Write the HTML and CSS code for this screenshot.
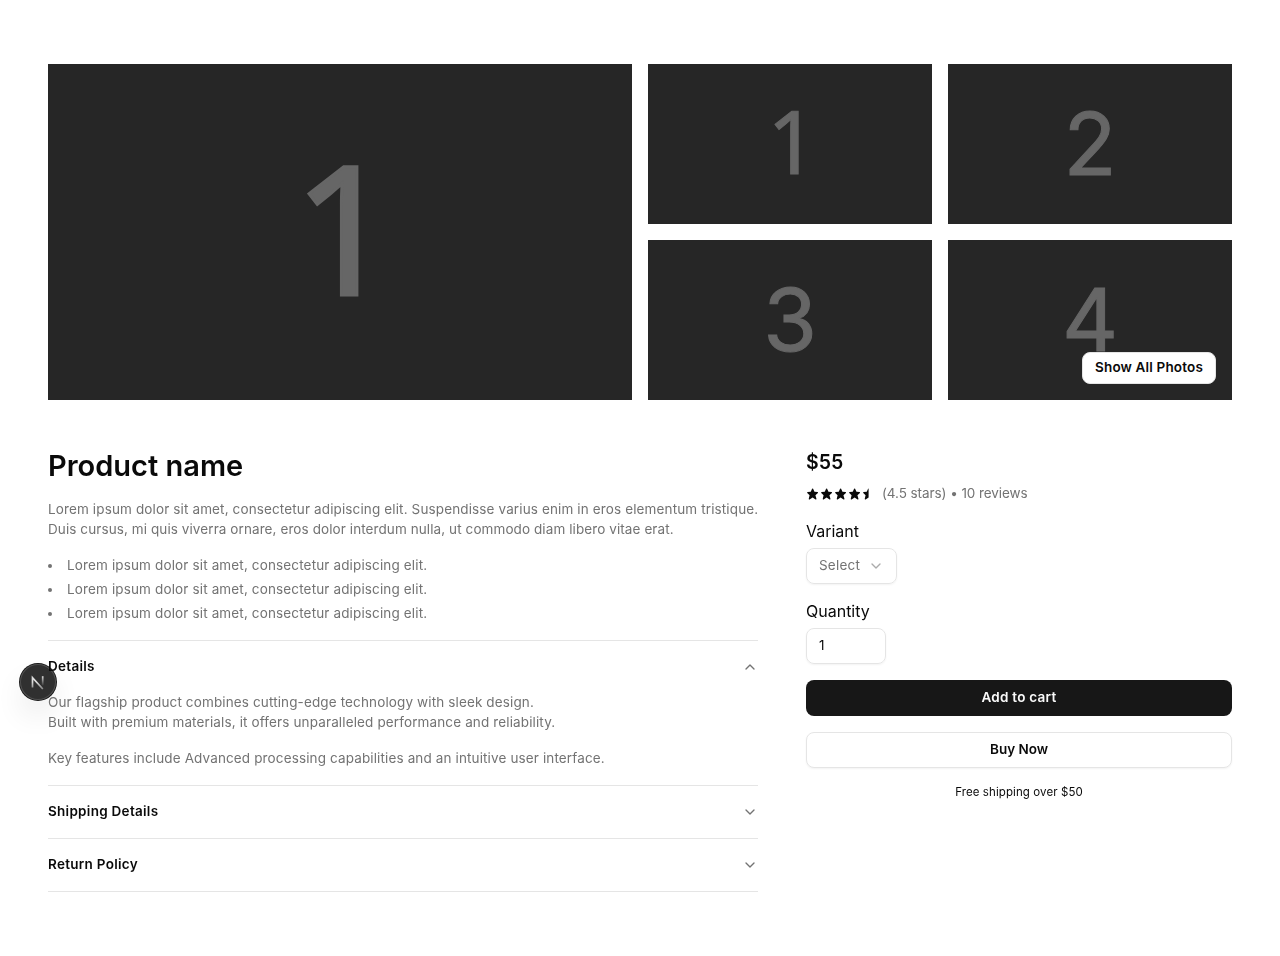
FILE: index.html
```html
<!DOCTYPE html>
<html lang="en">
<head>
<meta charset="utf-8">
<title>Product name</title>
<link rel="stylesheet" href="styles.css">
</head>
<body>
<svg class="defs" width="0" height="0" aria-hidden="true">
  <symbol id="star" viewBox="0 0 24 24"><path d="M21.947 9.179a1.001 1.001 0 0 0-.868-.676l-5.701-.453-2.467-5.461a.998.998 0 0 0-1.822-.001L8.622 8.05l-5.701.453a1 1 0 0 0-.619 1.713l4.213 4.107-1.49 6.452a1 1 0 0 0 1.53 1.057L12 18.202l5.445 3.63a1.001 1.001 0 0 0 1.517-1.106l-1.829-6.4 4.536-4.082c.297-.268.406-.686.278-1.065z"/></symbol>
  <symbol id="half" viewBox="0 0 24 24"><path d="M12 2a1 1 0 0 0-.911.587L8.622 8.05l-5.701.453a1 1 0 0 0-.619 1.713l4.213 4.107-1.49 6.452a1 1 0 0 0 1.53 1.057L12 18.202z"/></symbol>
  <symbol id="chevron" viewBox="0 0 24 24"><path d="m6 9 6 6 6-6" fill="none" stroke="currentColor" stroke-width="2" stroke-linecap="round" stroke-linejoin="round"/></symbol>
</svg>
<main class="page">
  <section class="gallery">
    <div class="tile tile-main"><span class="one">1</span></div>
    <div class="tile"><span class="one">1</span></div>
    <div class="tile"><span class="digit">2</span></div>
    <div class="tile"><span class="digit">3</span></div>
    <div class="tile"><span class="digit">4</span><button class="show-all">Show All Photos</button></div>
  </section>
  <div class="columns">
    <section class="info">
      <h1 class="title">Product name</h1>
      <p class="lead">Lorem ipsum dolor sit amet, consectetur adipiscing elit. Suspendisse varius enim in eros elementum tristique.<br><span class="lead-end">Duis cursus, mi quis viverra ornare, eros dolor interdum nulla, ut commodo diam libero vitae erat.</span></p>
      <ul class="bullets">
        <li>Lorem ipsum dolor sit amet, consectetur adipiscing elit.</li>
        <li>Lorem ipsum dolor sit amet, consectetur adipiscing elit.</li>
        <li>Lorem ipsum dolor sit amet, consectetur adipiscing elit.</li>
      </ul>
      <div class="accordion">
        <div class="item">
          <div class="trigger"><span>Details</span><svg class="chev up"><use href="#chevron"/></svg></div>
          <div class="content">
            <p>Our flagship product combines cutting-edge technology with sleek design.<br>Built with premium materials, it offers unparalleled performance and reliability.</p>
            <p>Key features include Advanced processing capabilities and an intuitive user interface.</p>
          </div>
        </div>
        <div class="item"><div class="trigger"><span>Shipping Details</span><svg class="chev"><use href="#chevron"/></svg></div></div>
        <div class="item"><div class="trigger"><span>Return Policy</span><svg class="chev"><use href="#chevron"/></svg></div></div>
      </div>
    </section>
    <aside class="buy">
      <div class="price">$55</div>
      <div class="rating">
        <div class="stars"><svg><use href="#star"/></svg><svg><use href="#star"/></svg><svg><use href="#star"/></svg><svg><use href="#star"/></svg><svg><use href="#half"/></svg></div>
        <span class="reviews">(4.5 stars) • 10 reviews</span>
      </div>
      <div class="field">
        <div class="label">Variant</div>
        <div class="box select"><span>Select</span><svg class="chev light"><use href="#chevron"/></svg></div>
      </div>
      <div class="field">
        <div class="label">Quantity</div>
        <div class="box number"><span>1</span></div>
      </div>
      <button class="btn primary">Add to cart</button>
      <button class="btn outline">Buy Now</button>
      <div class="shipping">Free shipping over $50</div>
    </aside>
  </div>
</main>
<div class="badge">
  <svg viewBox="0 0 36 36">
    <defs>
      <linearGradient id="fadeA" x1="0" y1="12" x2="0" y2="24" gradientUnits="userSpaceOnUse"><stop offset=".5" stop-color="#ddd"/><stop offset="1" stop-color="#ddd" stop-opacity=".55"/></linearGradient>
      <linearGradient id="fadeB" x1="0" y1="12" x2="0" y2="22" gradientUnits="userSpaceOnUse"><stop stop-color="#ddd"/><stop offset="1" stop-color="#ddd" stop-opacity="0"/></linearGradient>
    </defs>
    <path d="M12.5 23.6V13.6L22.8 25" fill="none" stroke="url(#fadeA)" stroke-width="1.7"/>
    <path d="M22.7 12.2V21.5" fill="none" stroke="url(#fadeB)" stroke-width="1.7"/>
  </svg>
</div>
</body>
</html>
```
FILE: styles.css
```css
* { box-sizing: border-box; margin: 0; padding: 0; }
body {
  background: #fff;
  color: #0a0a0a;
  font-family: Inter, Roboto, sans-serif;
  font-size: 13.5px;
  line-height: 20px;
}
.defs { position: absolute; }
.page { padding: 64px 48px; }
.gallery {
  display: grid;
  grid-template-columns: 584px 1fr 1fr;
  grid-template-rows: 160px 160px;
  gap: 16px;
}
.tile {
  position: relative;
  display: flex;
  align-items: center;
  justify-content: center;
  background: #262626;
  color: #666;
  font-size: 87px;
  line-height: 1;
  -webkit-text-stroke: 1px #666;
}
.tile-main { grid-row: span 2; font-size: 180px; -webkit-text-stroke-width: 3px; }
.one { font-family: "Noto Sans", sans-serif; padding: 0 0 .07em .05em; }
.digit { padding-bottom: 2px; }
.show-all {
  position: absolute;
  right: 16px;
  bottom: 16px;
  width: 134px;
  height: 32px;
  padding-bottom: 2px;
  border: 1px solid #e5e5e5;
  border-radius: 8px;
  background: #fff;
  color: #0a0a0a;
  font: 600 13.5px/20px Inter, sans-serif;
  letter-spacing: .16px;
  white-space: nowrap;
  -webkit-text-stroke: 0;
}
.columns {
  display: grid;
  grid-template-columns: 710px 426px;
  gap: 48px;
  margin-top: 48px;
}
.title { font-size: 29px; line-height: 36px; font-weight: 600; white-space: nowrap; }
.lead { margin-top: 15px; color: #737373; white-space: nowrap; letter-spacing: .13px; }
.lead-end { letter-spacing: .09px; }
.bullets { margin-top: 16px; list-style: none; display: grid; gap: 4px; color: #737373; letter-spacing: .14px; }
.bullets li { display: flex; align-items: center; gap: 15px; white-space: nowrap; }
.bullets li::before { content: ""; width: 4px; height: 4px; margin-top: 2px; border-radius: 50%; background: #737373; }
.accordion { margin-top: 17px; border-top: 1px solid #e5e5e5; }
.item { border-bottom: 1px solid #e5e5e5; }
.trigger {
  display: flex;
  justify-content: space-between;
  align-items: center;
  height: 52px;
  font-weight: 600;
  letter-spacing: .28px;
}
.trigger span, .reviews, .box span { padding-bottom: 2px; }
.chev { width: 16px; height: 16px; color: #737373; }
.up { transform: rotate(180deg); }
.light { opacity: .6; }
.content { display: grid; gap: 16px; margin-top: -1px; padding-bottom: 17px; color: #737373; white-space: nowrap; letter-spacing: .13px; }
.buy { display: flex; flex-direction: column; }
.price { font-size: 19.5px; line-height: 28px; font-weight: 600; }
.rating { display: flex; align-items: center; gap: 6px; height: 20px; margin-top: 8px; color: #737373; letter-spacing: -.07px; }
.stars { display: flex; color: #0a0a0a; fill: currentColor; }
.stars svg { width: 14px; height: 14px; padding: .3px .8px .3px 0; }
.field { margin-top: 16px; }
.label { height: 24px; font-size: 16px; line-height: 22px; }
.box {
  display: flex;
  align-items: center;
  height: 36px;
  margin-top: 4px;
  padding: 0 12px;
  border: 1px solid #e5e5e5;
  border-radius: 8px;
  box-shadow: 0 1px 2px rgba(0, 0, 0, .05);
}
.select { width: 91px; color: #737373; justify-content: space-between; letter-spacing: .2px; }
.number { width: 80px; }
.btn {
  height: 36px;
  margin-top: 16px;
  padding-bottom: 2px;
  border: 0;
  border-radius: 8px;
  font: 600 13.5px/20px Inter, sans-serif;
}
.primary { background: #171717; color: #fafafa; letter-spacing: .25px; }
.outline { background: #fff; color: #0a0a0a; border: 1px solid #e5e5e5; box-shadow: 0 1px 2px rgba(0, 0, 0, .05); letter-spacing: -.02px; }
.shipping { margin-top: 16px; font-size: 11.5px; line-height: 16px; text-align: center; letter-spacing: .09px; }
.badge {
  position: fixed;
  z-index: -1;
  left: 20px;
  top: 664px;
  width: 36px;
  height: 36px;
  border-radius: 50%;
  background: #303030;
  box-shadow: 0 0 0 1px #171717, inset 0 0 0 1px #505050, 0 16px 32px -8px rgba(0, 0, 0, .24);
}
.badge svg { display: block; width: 36px; height: 36px; }
```
